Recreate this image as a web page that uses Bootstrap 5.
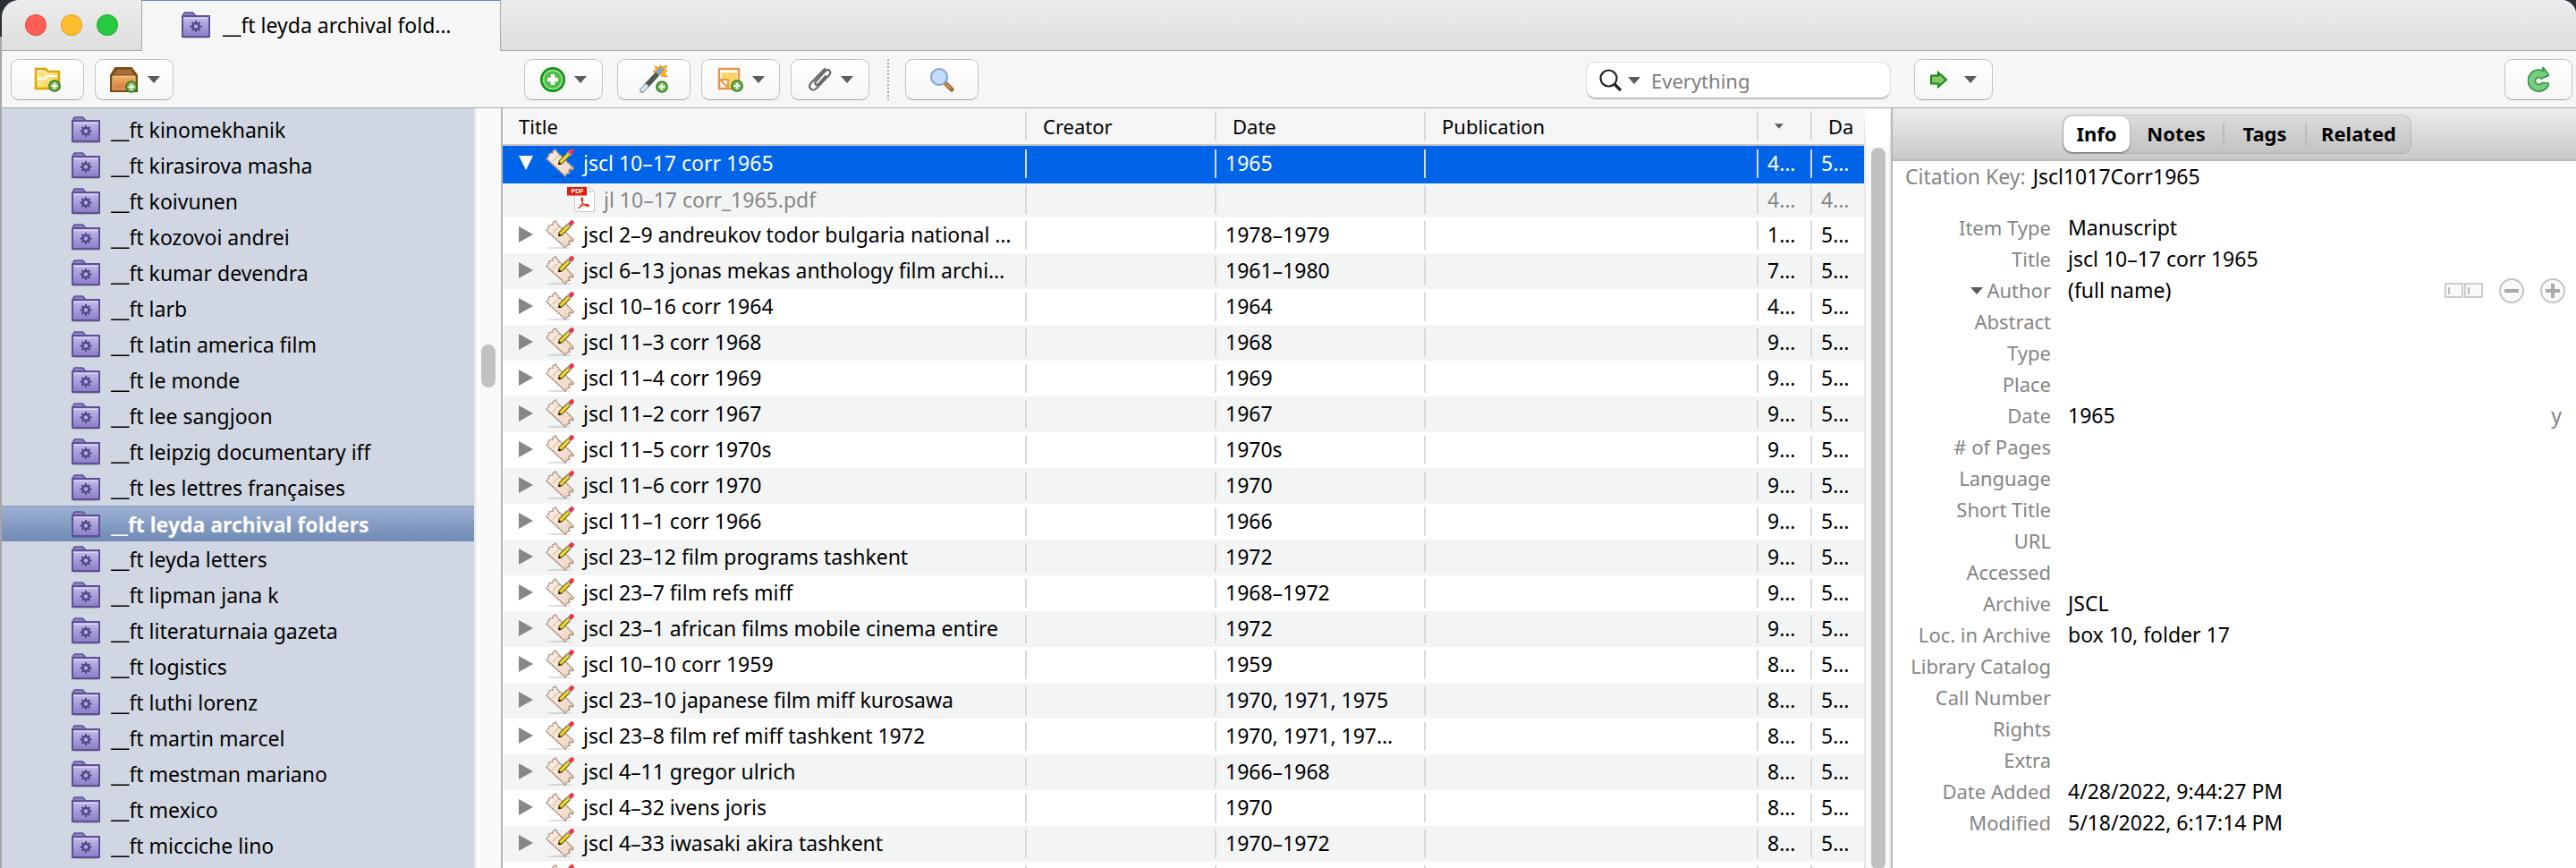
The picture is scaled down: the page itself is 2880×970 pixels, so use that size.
<!DOCTYPE html>
<html lang="en"><head><meta charset="utf-8"><title>Library</title>
<meta name="viewport" content="width=device-width, initial-scale=1">
<link href="https://cdn.jsdelivr.net/npm/bootstrap@5.3.0/dist/css/bootstrap.min.css" rel="stylesheet">
<style>
:root{--line:#a8a8a8;--split:#b8b8b8;--bar:#f6f6f6}
body{font-family:"Noto Sans","Open Sans",sans-serif;font-size:22px;line-height:40px;color:#000;background:linear-gradient(#2c2f36 41px,#a6a7aa 41px)}
svg{flex:none;display:block}
.window{margin-left:2px;background:var(--bar);border-radius:20px 16px 0 0}
.titlebar{height:57px;background:linear-gradient(#ececec,#dedede);border-bottom:1px solid var(--line)}
.lights{width:156px;padding-left:26px;gap:16px}
.light{width:24px;height:24px;border-radius:50%;border:1px solid #0002}
.wintab{width:402px;margin-bottom:-1px;background:var(--bar);border:1px solid var(--line);border-top-color:#5b8ac9;border-bottom:0;padding:0 30px 2px 44px;gap:14px;font-size:23px;line-height:54px}
.toolbar{height:64px;border-bottom:1px solid var(--line);padding:0 4px 0 10px}
.tool{width:82px;height:46px;padding:0;border:1px solid #c4c4c4;border-bottom-color:#a2a2a2;border-radius:9px;background:linear-gradient(#fff,#f6f6f6);gap:10px}
.tool-drop{width:88px}
.tool.reload{width:76px}
.tb-left{width:574px;gap:12px}
.tb-right{width:736px}
.dots{height:46px;border-left:2px dotted #aaa;margin:0 18px 0 20px}
.gap-w{margin-right:16px}.gap-n{margin-right:12px}
.search{width:341px;height:42px;margin-top:3px;margin-right:26px;border:1px solid #ddd;border-bottom:2px solid #bbb;border-radius:11px;background:#fff;padding:0 14px;gap:6px}
.search input{border:0;outline:0;background:none;min-width:0;margin-left:6px;padding:0;line-height:36px}
.search input::placeholder{color:#7d7d7d;opacity:1}
.sidebar{width:558px;background:#d1d7e2;border-right:2px solid var(--split);box-sizing:content-box;flex:none}
.folders{padding-top:4px}
.folder{padding-left:78px;gap:12px;color:#000;font-size:23px;text-decoration:none;white-space:nowrap}
.folder.active{background:linear-gradient(#9bafd1,#6f8ab5);border-top:2px solid #8da3c8;line-height:38px;color:#fff;font-weight:700}
.track{background:#fafafa;border-left:2px solid #e6e6e6}
.track-s{width:30px;padding:264px 6px 0 6px}
.track-l{width:30px;padding:0 6px;border-top:42px solid #fff;border-right:2px solid #eee}
.thumb{background:#c1c1c1;border-radius:8px;width:16px}
.track-s .thumb{height:48px}
.track-l .thumb{height:100%;margin-top:2px}
.items{table-layout:fixed;width:100%;border-collapse:separate;border-spacing:0}
.items th{height:42px;padding:0 6px 0 20px;font-weight:400;background-color:var(--bar);border-bottom:2px solid #c8c8c8;overflow:hidden;white-space:nowrap}
.items td{height:40px;padding:0 6px 2px 12px;font-size:23px;line-height:38px;overflow:hidden;text-overflow:ellipsis;white-space:nowrap}
.items td+td,.items th+th{background-image:linear-gradient(#d9d9d9,#d9d9d9);background-size:2px 32px;background-position:0 4px;background-repeat:no-repeat}
.items th:first-child{padding-left:18px}
.items td:first-child{padding-left:18px}
.items tbody tr{background:#fff}
.items tbody tr:nth-child(even){background:#f3f5f5}
.items tbody tr.chosen{background:#0064e9;color:#fff}
.items tr.chosen td{height:42px;padding-bottom:4px}
.items tr.attach{color:#868686}
.items tr.attach td{height:38px;line-height:36px;background-position:0 2px}
.items tr.attach .cell{height:36px}
.items tr.attach td:first-child{padding-left:72px}
.items td.text-clip{text-overflow:clip}
.cell{height:38px;gap:10px}
.twisty{border:0;background:none;padding:0;width:16px;margin-right:4px;color:#878787}
.chosen .twisty{color:#fff}
.c-title{width:584px}.c-creator{width:212px}.c-date{width:234px}.c-n{width:60px}
.inspector{width:766px;flex:none;border-left:2px solid var(--split);background:#fff}
.tabstrip{height:59px;background:linear-gradient(#ececec,#c9c9c9);border-bottom:2px solid #b9b9b9;padding-left:190px}
.tabset{height:44px;background:#0000000d;border:1px solid #0000001a;border-radius:11px;padding:1px 0}
.tabset button{height:40px;line-height:36px;border:0;background:none;padding:0 0 2px;font-weight:700;text-shadow:0 1px #fff8}
.tabset button.active{background:#fff;border-radius:10px;box-shadow:0 1px 2px #0007}
.tab-a{width:74px}.tab-b{width:104px}.tab-c{width:90px}.tab-d{width:116px}
.tabset i{width:2px;height:24px;background:#bbb}
.field{line-height:35px;height:35px}
.field dt{width:177px;text-align:right;font-weight:400;color:#858585;margin-right:19px;flex:none;white-space:nowrap}
.field dd{margin:0;flex:1;font-size:23px}
.cite{font-size:23px;line-height:35px;margin-bottom:22px;padding-left:14px;gap:8px}
.muted{color:#858585}
.round{width:28px;height:28px;border:2px solid #c4c4c4;border-radius:50%;background:#fafafa;padding:0}
.field .tools{gap:18px;padding-right:12px}
</style></head>
<body>
<svg width="0" height="0" class="position-absolute"><defs>
<linearGradient id="gp" x2="0" y2="1"><stop stop-color="#c5bde8"/><stop offset="1" stop-color="#8b7cc8"/></linearGradient>
<linearGradient id="gy" x2="1" y2="1"><stop stop-color="#fffbe0"/><stop offset="1" stop-color="#f2c522"/></linearGradient>
<linearGradient id="go" x2="0" y2="1"><stop stop-color="#eeb562"/><stop offset="1" stop-color="#d8783a"/></linearGradient>
<linearGradient id="gn" x2="1" y2="1"><stop stop-color="#fdf1e6"/><stop offset="1" stop-color="#ecd3c1"/></linearGradient>
<symbol id="folder" viewBox="0 0 32 30"><path d="M2 29.500h28" stroke="#0003" stroke-width="1"/><path d="M2 5V2.500L3.500 1h9L16 5z" fill="#8f83c4" stroke="#5d5196" stroke-width="1.500"/><path d="M1 5h30v23H1z" fill="url(#gp)" stroke="#5d5196" stroke-width="2"/><path d="M2.500 7.500h27" stroke="#ddd8f4"/><g stroke="#51478a" stroke-width="2"><path d="M16 10v13M9.500 16.500h13M11.500 12l9 9M20.500 12l-9 9"/></g><circle cx="16" cy="16.500" r="3.500" fill="#b3aadd" stroke="#51478a" stroke-width="2.500"/></symbol>
<symbol id="plus" viewBox="0 0 14 14"><circle cx="7" cy="7" r="6" fill="#7dbb5b" stroke="#2f7a23" stroke-width="1.700"/><path d="M7 3.700v6.600M3.700 7h6.600" stroke="#fff" stroke-width="2.200"/></symbol>
<symbol id="note" viewBox="0 0 32 32"><ellipse cx="15" cy="31" rx="14" ry="1.200" fill="#0002"/><path d="M11 1 13 4 14 5 32 22 30 24 27 23 26 25 27 27 24 28 22 31 1 11.500 3 9 4 6 6 5 8 5 8 3z" fill="url(#gn)"/><path d="M11 1 13 4 14 5 31 22 30 24 27 23 26 25 27 27 24 28 22 31 1 11.500 3 9 4 6 6 5 8 5 8 3z" fill="none" stroke="#ab8f7d" stroke-width="1.600" stroke-dasharray="2.500 .7"/><path d="m15 7-7 7" stroke="#b09a88" stroke-dasharray="1.500 1.500" stroke-width="1.200"/><path d="M16 16 26 6" stroke="#806a10" stroke-width="5.500"/><path d="M16.500 15.500 26 6" stroke="#f0dc38" stroke-width="3"/><path d="m25.500 6.500 2.500-2.500" stroke="#a9a9ad" stroke-width="5.500"/><path d="m28.500 3.500 .8-.8" stroke="#e63a48" stroke-width="5" stroke-linecap="round"/><path d="m14 18.300.5-3.800 3.300 3.300z" fill="#1a1408"/></symbol>
<symbol id="pdf" viewBox="0 0 31 30"><path d="M8.500 1H25l5.500 5.500V28.500h-22z" fill="#fff" stroke="#c8c8c8"/><path d="M25 1v5.500h5.500" fill="#eee" stroke="#ccc"/><path d="M0 1h22v9.500H0z" fill="#dd1e0b"/><text x="4.500" y="8.300" font-size="7" font-weight="700" fill="#fff" font-family="Liberation Sans">PDF</text><path d="M12.500 25c3-2 5-6 5-11 0-2-2-1-1.500 1 1 5 4 7 8 7.500 1 0 .5-2-2-2-4 0-7 1.500-9.500 4.500z" fill="none" stroke="#e8311f" stroke-width="1.300"/></symbol>
<symbol id="down" viewBox="0 0 14 8"><path d="M0 0h14L7 8z" fill="#5c5c5c"/></symbol>
<symbol id="right" viewBox="0 0 16 18"><path d="M0 0v18l16-9z" fill="currentColor"/></symbol>
<symbol id="open" viewBox="0 0 16 16"><path d="M0 0h16L8 16z" fill="currentColor"/></symbol>
</defs></svg>
<div class="window vh-100 d-flex flex-column overflow-hidden">
<header class="titlebar d-flex flex-shrink-0">
<div class="lights d-flex align-items-center"><span class="light" style="background:#ff5f57"></span><span class="light" style="background:#febc2e"></span><span class="light" style="background:#28c840"></span></div>
<div class="wintab d-flex align-items-center"><svg width="32" height="30"><use href="#folder"/></svg><span class="text-nowrap">__ft leyda archival fold…</span></div>
</header>
<div class="toolbar d-flex align-items-center flex-shrink-0">
<div class="tb-left d-flex flex-shrink-0">
<button class="tool d-flex align-items-center justify-content-center" aria-label="New collection"><svg width="30" height="28" viewBox="0 0 30 28"><path d="M2 24V2h11l3 3h12v19z" fill="url(#gy)" stroke="#e2a400" stroke-width="2.500"/><path d="M4 13h8l3-3h11" stroke="#fff" stroke-width="2" fill="none"/><path d="M5 5h7v5H5z" fill="#fadf7c"/><use href="#plus" x="16" y="14" width="14" height="14"/></svg></button>
<button class="tool tool-drop d-flex align-items-center justify-content-center" aria-label="New library"><svg width="33" height="30" viewBox="0 0 33 30"><path d="M2 10 7 2h18l6 8v18H2z" fill="#8a541c" stroke="#7b4a17" stroke-width="2"/><path d="M9 4h15l3 5H6z" fill="#a4733c"/><path d="M4 11h25v15H4z" fill="url(#go)" stroke="#f3c58c"/><use href="#plus" x="18" y="16" width="14" height="14"/></svg><svg width="14" height="8"><use href="#down"/></svg></button>
</div>
<div class="d-flex flex-grow-1">
<button class="tool tool-drop gap-w d-flex align-items-center justify-content-center" aria-label="New item"><svg width="28" height="28" viewBox="0 0 28 28"><circle cx="14" cy="14" r="12.500" fill="#52bb4b" stroke="#0c970c" stroke-width="3"/><circle cx="14" cy="14" r="10.500" fill="none" stroke="#a9e2a4" stroke-width="1.500"/><path d="M14 8v12M8 14h12" stroke="#fff" stroke-width="4.500"/></svg><svg width="14" height="8"><use href="#down"/></svg></button>
<button class="tool gap-n d-flex align-items-center justify-content-center" aria-label="Add by identifier"><svg width="32" height="31" viewBox="0 0 32 31"><path d="m31 0-3 5 3 1-3 3 3 4-6-1-3-4-7-1 4-2-2-4 5 2 1-3 3 2z" fill="#ffb800" stroke="#f08a1c"/><path d="M3 28 24 5" stroke="#8da3b5" stroke-width="6" stroke-linecap="round"/><path d="m8 22.500 12-13" stroke="#555" stroke-width="5.500"/><path d="m3.500 27.500 4-4.500" stroke="#d3e5f5" stroke-width="4" stroke-linecap="round"/><use href="#plus" x="18" y="17" width="14" height="14"/></svg></button>
<button class="tool tool-drop gap-n d-flex align-items-center justify-content-center" aria-label="New note"><svg width="29" height="28" viewBox="0 0 29 28"><path d="M2 2h22v22H2z" fill="#fff" stroke="#eb9444" stroke-width="2.500"/><path d="M5 6h17v17H12L5 14z" fill="#f5d568"/><path d="M3 14h9v9z" fill="#fff" stroke="#eb9444" stroke-width="2"/><use href="#plus" x="15" y="14" width="14" height="14"/></svg><svg width="14" height="8"><use href="#down"/></svg></button>
<button class="tool tool-drop d-flex align-items-center justify-content-center" aria-label="Add attachment"><svg width="27" height="28" viewBox="0 0 27 28"><path d="M19 2 3.500 18c-4 5 2 10 6 6L24 9c4-5-2-8-5-4L9 16c-2 3 1 5 3 3L20 10" fill="none" stroke="#6b6b6b" stroke-width="2.300" stroke-linecap="round"/></svg><svg width="14" height="8"><use href="#down"/></svg></button>
<span class="dots"></span>
<button class="tool d-flex align-items-center justify-content-center" aria-label="Advanced search"><svg width="28" height="28" viewBox="0 0 28 28"><path d="m17 17 8 8" stroke="#9a622c" stroke-width="5" stroke-linecap="round"/><path d="m18 18 6 6" stroke="#d59a5a" stroke-width="2"/><circle cx="11" cy="11" r="9" fill="#c6dcf6" stroke="#7ba2d6" stroke-width="2"/></svg></button>
</div>
<label class="search d-flex align-items-center flex-shrink-0"><svg width="26" height="26" viewBox="0 0 26 26"><circle cx="10.500" cy="10.500" r="9" fill="none" stroke="#222" stroke-width="2.200"/><path d="m17 17 7 7" stroke="#222" stroke-width="3.200"/></svg><svg width="14" height="8"><use href="#down"/></svg><input class="flex-grow-1" type="search" placeholder="Everything" aria-label="Search"></label>
<div class="tb-right d-flex justify-content-between flex-shrink-0">
<button class="tool tool-drop d-flex align-items-center justify-content-center" aria-label="Locate"><svg width="20" height="20" viewBox="0 0 20 20"><path d="M1 5.500h8V2l9 8-9 8v-3.500H1z" fill="#8ac46b" stroke="#118a0d" stroke-width="2"/></svg><span class="ps-2"><svg width="14" height="8"><use href="#down"/></svg></span></button>
<button class="tool reload d-flex align-items-center justify-content-center" aria-label="Sync"><svg width="24" height="28" viewBox="0 0 24 28"><path d="M16 17.500A4 4 0 1 1 13.500 11.500L15 13 24 9 17 0V4A12 12 0 1 0 24 18z" fill="#7cca7e" stroke="#2d9444" stroke-width="1.600"/></svg></button>
</div></div>
<main class="d-flex flex-grow-1 overflow-hidden">
<aside class="sidebar d-flex">
<nav class="folders flex-grow-1 overflow-hidden">
<a href="#" class="folder d-flex align-items-center"><svg width="32" height="30"><use href="#folder"/></svg>__ft kinomekhanik</a>
<a href="#" class="folder d-flex align-items-center"><svg width="32" height="30"><use href="#folder"/></svg>__ft kirasirova masha</a>
<a href="#" class="folder d-flex align-items-center"><svg width="32" height="30"><use href="#folder"/></svg>__ft koivunen</a>
<a href="#" class="folder d-flex align-items-center"><svg width="32" height="30"><use href="#folder"/></svg>__ft kozovoi andrei</a>
<a href="#" class="folder d-flex align-items-center"><svg width="32" height="30"><use href="#folder"/></svg>__ft kumar devendra</a>
<a href="#" class="folder d-flex align-items-center"><svg width="32" height="30"><use href="#folder"/></svg>__ft larb</a>
<a href="#" class="folder d-flex align-items-center"><svg width="32" height="30"><use href="#folder"/></svg>__ft latin america film</a>
<a href="#" class="folder d-flex align-items-center"><svg width="32" height="30"><use href="#folder"/></svg>__ft le monde</a>
<a href="#" class="folder d-flex align-items-center"><svg width="32" height="30"><use href="#folder"/></svg>__ft lee sangjoon</a>
<a href="#" class="folder d-flex align-items-center"><svg width="32" height="30"><use href="#folder"/></svg>__ft leipzig documentary iff</a>
<a href="#" class="folder d-flex align-items-center"><svg width="32" height="30"><use href="#folder"/></svg>__ft les lettres françaises</a>
<a href="#" class="folder active d-flex align-items-center"><svg width="32" height="30"><use href="#folder"/></svg>__ft leyda archival folders</a>
<a href="#" class="folder d-flex align-items-center"><svg width="32" height="30"><use href="#folder"/></svg>__ft leyda letters</a>
<a href="#" class="folder d-flex align-items-center"><svg width="32" height="30"><use href="#folder"/></svg>__ft lipman jana k</a>
<a href="#" class="folder d-flex align-items-center"><svg width="32" height="30"><use href="#folder"/></svg>__ft literaturnaia gazeta</a>
<a href="#" class="folder d-flex align-items-center"><svg width="32" height="30"><use href="#folder"/></svg>__ft logistics</a>
<a href="#" class="folder d-flex align-items-center"><svg width="32" height="30"><use href="#folder"/></svg>__ft luthi lorenz</a>
<a href="#" class="folder d-flex align-items-center"><svg width="32" height="30"><use href="#folder"/></svg>__ft martin marcel</a>
<a href="#" class="folder d-flex align-items-center"><svg width="32" height="30"><use href="#folder"/></svg>__ft mestman mariano</a>
<a href="#" class="folder d-flex align-items-center"><svg width="32" height="30"><use href="#folder"/></svg>__ft mexico</a>
<a href="#" class="folder d-flex align-items-center"><svg width="32" height="30"><use href="#folder"/></svg>__ft micciche lino</a>
</nav>
<div class="track track-s"><div class="thumb"></div></div>
</aside>
<section class="flex-grow-1 d-flex overflow-hidden bg-white">
<div class="flex-grow-1 overflow-hidden">
<table class="items"><thead><tr><th class="c-title">Title</th><th class="c-creator">Creator</th><th class="c-date">Date</th><th>Publication</th><th class="c-n"><svg width="10" height="6"><use href="#down"/></svg></th><th class="c-n">Da</th></tr></thead>
<tbody id="rows"></tbody></table></div>
<div class="track track-l flex-shrink-0"><div class="thumb"></div></div>
</section>
<aside class="inspector">
<div class="tabstrip d-flex align-items-center"><div class="tabset d-flex align-items-center" role="tablist"><button class="tab-a active" role="tab">Info</button><button class="tab-b" role="tab">Notes</button><i></i><button class="tab-c" role="tab">Tags</button><i></i><button class="tab-d" role="tab">Related</button></div></div>
<div class="cite d-flex"><span class="muted">Citation Key:</span><span>Jscl1017Corr1965</span></div>
<dl class="m-0">
<div class="field d-flex"><dt>Item Type</dt><dd>Manuscript</dd></div>
<div class="field d-flex"><dt>Title</dt><dd>jscl 10–17 corr 1965</dd></div>
<div class="field d-flex"><dt class="d-flex align-items-center justify-content-end gap-1"><svg width="14" height="8"><use href="#down"/></svg>Author</dt><dd>(full name)</dd><dd class="tools d-flex align-items-center justify-content-end"><svg width="43" height="18" viewBox="0 0 43 18"><path d="M1 1h19v15H1zM23 1h19v15H23z" fill="#fafafa" stroke="#ccc" stroke-width="2"/><path d="M5 5v8M27 5v8" stroke="#bbb" stroke-width="2"/></svg><button class="round d-flex align-items-center justify-content-center" aria-label="Remove"><svg width="16" height="16"><path d="M0 8h16" stroke="#aaa" stroke-width="4"/></svg></button><button class="round d-flex align-items-center justify-content-center" aria-label="Add"><svg width="16" height="16"><path d="M0 8h16M8 0v16" stroke="#aaa" stroke-width="4"/></svg></button></dd></div>
<div class="field d-flex"><dt>Abstract</dt><dd></dd></div>
<div class="field d-flex"><dt>Type</dt><dd></dd></div>
<div class="field d-flex"><dt>Place</dt><dd></dd></div>
<div class="field d-flex"><dt>Date</dt><dd class="d-flex justify-content-between pe-3">1965<span class="muted">y</span></dd></div>
<div class="field d-flex"><dt># of Pages</dt><dd></dd></div>
<div class="field d-flex"><dt>Language</dt><dd></dd></div>
<div class="field d-flex"><dt>Short Title</dt><dd></dd></div>
<div class="field d-flex"><dt>URL</dt><dd></dd></div>
<div class="field d-flex"><dt>Accessed</dt><dd></dd></div>
<div class="field d-flex"><dt>Archive</dt><dd>JSCL</dd></div>
<div class="field d-flex"><dt>Loc. in Archive</dt><dd>box 10, folder 17</dd></div>
<div class="field d-flex"><dt>Library Catalog</dt><dd></dd></div>
<div class="field d-flex"><dt>Call Number</dt><dd></dd></div>
<div class="field d-flex"><dt>Rights</dt><dd></dd></div>
<div class="field d-flex"><dt>Extra</dt><dd></dd></div>
<div class="field d-flex"><dt>Date Added</dt><dd>4/28/2022, 9:44:27 PM</dd></div>
<div class="field d-flex"><dt>Modified</dt><dd>5/18/2022, 6:17:14 PM</dd></div>
</dl></aside>
</main></div>
<script src="https://cdn.jsdelivr.net/npm/bootstrap@5.3.0/dist/js/bootstrap.bundle.min.js"></script>
<script>
const items = [
['jscl 10–17 corr 1965','1965','4…','5…'],
['jl 10–17 corr_1965.pdf','','4…','4…'],
['jscl 2–9 andreukov todor bulgaria national …','1978–1979','1…','5…'],
['jscl 6–13 jonas mekas anthology film archi…','1961–1980','7…','5…'],
['jscl 10–16 corr 1964','1964','4…','5…'],
['jscl 11–3 corr 1968','1968','9…','5…'],
['jscl 11–4 corr 1969','1969','9…','5…'],
['jscl 11–2 corr 1967','1967','9…','5…'],
['jscl 11–5 corr 1970s','1970s','9…','5…'],
['jscl 11–6 corr 1970','1970','9…','5…'],
['jscl 11–1 corr 1966','1966','9…','5…'],
['jscl 23–12 film programs tashkent','1972','9…','5…'],
['jscl 23–7 film refs miff','1968–1972','9…','5…'],
['jscl 23–1 african films mobile cinema entire','1972','9…','5…'],
['jscl 10–10 corr 1959','1959','8…','5…'],
['jscl 23–10 japanese film miff kurosawa','1970, 1971, 1975','8…','5…'],
['jscl 23–8 film ref miff tashkent 1972','1970, 1971, 197…','8…','5…'],
['jscl 4–11 gregor ulrich','1966–1968','8…','5…'],
['jscl 4–32 ivens joris','1970','8…','5…'],
['jscl 4–33 iwasaki akira tashkent','1970–1972','8…','5…'],
['','','','']];
document.getElementById('rows').innerHTML = items.map(([t, d, a, b], i) => {
  const lead = i === 1
    ? '<svg width="31" height="30"><use href="#pdf"/></svg>'
    : `<button class="twisty" aria-label="Toggle">${i ? '<svg width="16" height="18"><use href="#right"/></svg>' : '<svg width="16" height="16"><use href="#open"/></svg>'}</button><svg width="32" height="32"><use href="#note"/></svg>`;
  return `<tr class="${['chosen', 'attach'][i] || ''}"><td><div class="cell d-flex align-items-center">${lead}<span>${t}</span></div></td><td></td><td>${d}</td><td></td><td class="text-clip">${a}</td><td class="text-clip">${b}</td></tr>`;
}).join('');
</script>
</body></html>
